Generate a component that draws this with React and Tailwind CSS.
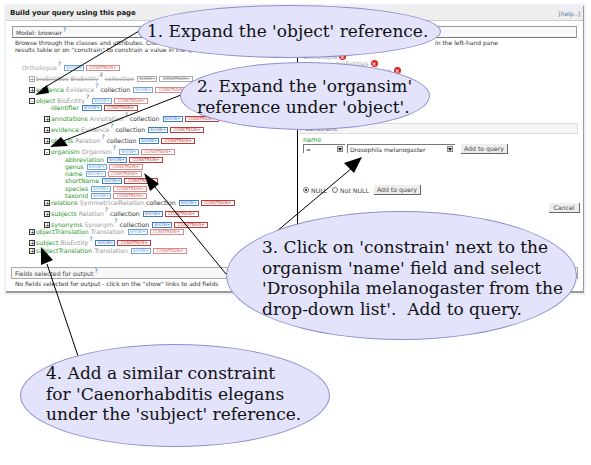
const rows = [
  { x: "pl-[16px]", h: "h-[11px]", name: "Orthologue", q: true, muted: true },
  { x: "pl-[23px]", h: "h-[11px]", icon: "+", field: "bioEntities", cls: "BioEntity", coll: true, q: true, strike: true },
  { x: "pl-[23px]", h: "h-[11px]", icon: "+", field: "evidence", cls: "Evidence", coll: true, q: true, light: true },
  { x: "pl-[23px]", h: "h-[7px]", icon: "-", field: "object", cls: "BioEntity", q: true, light: true },
  { x: "pl-[45px]", h: "h-[11px]", field: "identifier" },
  { x: "pl-[38px]", h: "h-[11px]", icon: "+", field: "annotations", cls: "Annotation", coll: true, q: true },
  { x: "pl-[38px]", h: "h-[11px]", icon: "+", field: "evidence", cls: "Evidence", coll: true, q: true },
  { x: "pl-[38px]", h: "h-[11px]", icon: "+", field: "objects", cls: "Relation", coll: true, q: true },
  { x: "pl-[38px]", h: "h-[8px]", icon: "-", field: "organism", cls: "Organism", q: true, light: true },
  { x: "pl-[59px]", h: "h-[7px]", field: "abbreviation" },
  { x: "pl-[59px]", h: "h-[7px]", field: "genus", light: true },
  { x: "pl-[59px]", h: "h-[7px]", field: "name", light: true },
  { x: "pl-[59px]", h: "h-[8px]", field: "shortName" },
  { x: "pl-[59px]", h: "h-[7px]", field: "species", light: true },
  { x: "pl-[59px]", h: "h-[7px]", field: "taxonId", light: true },
  { x: "pl-[38px]", h: "h-[11px]", icon: "+", field: "relations", cls: "SymmetricalRelation", coll: true },
  { x: "pl-[38px]", h: "h-[11px]", icon: "+", field: "subjects", cls: "Relation", coll: true, q: true },
  { x: "pl-[38px]", h: "h-[7.5px]", icon: "+", field: "synonyms", cls: "Synonym", coll: true, q: true },
  { x: "pl-[23px]", h: "h-[11px]", icon: "+", field: "objectTranslation", cls: "Translation", light: true },
  { x: "pl-[23px]", h: "h-[7.5px]", icon: "+", field: "subject", cls: "BioEntity", q: true },
  { x: "pl-[23px]", h: "h-[7px]", icon: "+", field: "subjectTranslation", cls: "Translation", light: true },
];

function Badges({ light, strike }) {
  if (strike)
    return (
      <span className="flex gap-[2px] ml-[3px] mt-[1px]">
        <span className="w-[20px] h-[6px] border border-[#aaa] text-[4px] leading-[4px] text-center text-[#888]">SHOW+</span>
        <span className="w-[34px] h-[6px] border border-[#aaa] text-[4px] leading-[4px] text-center text-[#888]">CONSTRAIN+</span>
      </span>
    );
  return (
    <span className="flex gap-[2px] ml-[3px] mt-[1px]">
      <span className={light ? "w-[20px] h-[6px] border border-[#6fa3dc] text-[4px] leading-[4px] text-center text-[#6fa3dc]" : "w-[20px] h-[6px] border border-[#3c7cc4] text-[4px] leading-[4px] text-center text-[#3c7cc4]"}>SHOW+</span>
      <span className={light ? "w-[34px] h-[6px] border border-[#d88] text-[4px] leading-[4px] text-center text-[#c66]" : "w-[34px] h-[6px] border border-[#c03a3a] text-[4px] leading-[4px] text-center text-[#c03a3a]"}>CONSTRAIN+</span>
    </span>
  );
}

function Row({ r }) {
  return (
    <div className={`flex items-start whitespace-nowrap text-[6.2px] ${r.x} ${r.h} ${r.strike ? "line-through text-[#aaa]" : ""}`}>
      {r.icon && (
        <span className={r.strike ? "w-[6px] h-[6px] mt-[1px] border border-[#aaa] text-[#aaa] text-[6px] leading-[4px] text-center mr-[1px] shrink-0" : "w-[6px] h-[6px] mt-[1px] border border-[#333] text-[#222] text-[6px] leading-[4px] text-center mr-[1px] shrink-0"}>{r.icon}</span>
      )}
      {r.field && <span className={r.strike ? "text-[#aaa]" : "text-[#2a962a]"}>{r.field}</span>}
      {r.name && <span className="text-[#aaa]">{r.name}</span>}
      {r.cls && <span className={r.strike ? "text-[#aaa] ml-[2px]" : "text-[#999] ml-[2px]"}>{r.cls}</span>}
      {r.q && <span className="text-[#2a5fb0] text-[6px] leading-[6px] -mt-[3px] ml-[1px]">?</span>}
      {r.coll && <span className={r.strike ? "text-[#aaa] ml-[2px]" : "text-[#333] ml-[2px]"}>collection</span>}
      <Badges light={r.light || r.muted} strike={r.strike} />
    </div>
  );
}

function Select({ w, text }) {
  return (
    <div className={`flex items-center justify-between h-[9px] border-t border-l border-[#777] bg-white ${w}`}>
      <span className="pl-[2px] text-[6px] leading-[7px] text-[#333]">{text}</span>
      <span className="w-[6px] h-[6px] mr-[2px] bg-[#ddd] border border-[#888] flex items-center justify-center">
        <svg width="4" height="3" viewBox="0 0 4 3"><path d="M0 0H4L2 3Z" fill="#222" /></svg>
      </span>
    </div>
  );
}

function Btn({ children, w }) {
  return (
    <span className={`h-[10px] bg-[#eee] border-r border-b border-[#666] text-[6.2px] leading-[9px] text-center text-[#444] ${w}`}>{children}</span>
  );
}

function RedX() {
  return (
    <span className="inline-flex w-[7px] h-[7px] rounded-full bg-[#e02020] text-white text-[6px] leading-[7px] items-center justify-center font-bold">×</span>
  );
}

export default function App() {
  return (
    <div className="relative w-[591px] h-[465px] bg-white overflow-hidden font-['DejaVu_Sans',sans-serif] text-[6.2px] leading-[7px]">
      <div className="ml-[4px] mt-[4px] w-[582px] h-[291px] bg-[#f0f0fa] pl-[2px] pt-[2px]">
        <div className="w-[578px] h-[287px] bg-white border-r border-b-2 border-[#999] flex flex-col">
          <div className="h-[15px] shrink-0 bg-[#eee] border-b border-[#ccc] flex items-center justify-between pl-[4px] pr-[3px]">
            <span className="text-[7px] text-[#222] font-bold tracking-[-0.1px]">Build your query using this page</span>
            <span className="text-[6px] text-[#5577aa]">[help..]</span>
          </div>
          <div className="mx-[6px] mt-[5px] h-[12px] shrink-0 border border-[#999] border-b-[#777] bg-[#f8f8f8] flex items-center pl-[3px] text-[#444] text-[6px]">
            Model: browser<span className="text-[#2a5fb0] -mt-[6px] ml-[1px]">?</span>
          </div>
          <div className="ml-[9px] mt-[2px] h-[16px] shrink-0 text-[6px] leading-[6.5px] text-[#333] whitespace-nowrap">
            <div className="flex justify-between pr-[85px]">
              <span>Browse through the classes and attributes. Click</span>
              <span>in the left-hand pane</span>
            </div>
            <div>results table or on "constrain" to constrain a value in the query.</div>
          </div>
          <div className="flex flex-1 min-h-0">
            <div className="w-[291px] shrink-0 pt-[7.5px]">
              {rows.map((r, i) => (
                <Row key={i} r={r} />
              ))}
            </div>
            <div className="flex-1 border-l border-black -mt-[3px] pl-[5px] pr-[5px]">
              <div className="flex items-center gap-[1px] h-[7px] text-[#aaa]">Orthologue<RedX /></div>
              <div className="flex items-center gap-[2px] h-[7px] pl-[33px] text-[#aaa]">bioEntities<RedX /></div>
              <div className="flex items-center gap-[2px] h-[7px] pl-[59px] text-[#aaa]">collection<RedX /></div>
              <div className="mt-[49px] -ml-[3px] h-[11px] border border-[#ddd] bg-[#f6f6f6] flex items-center pl-[4px] text-[#666]">Constraint</div>
              <div className="mt-[3px] text-[#2a962a] text-[6.5px]">name</div>
              <div className="flex items-start gap-[2px]">
                <Select w="w-[42px]" text="=" />
                <Select w="w-[108px]" text="Drosophila melanogaster" />
                <span className="ml-[4px]"><Btn w="w-[47px] inline-block">Add to query</Btn></span>
              </div>
              <div className="flex items-center mt-[31px] h-[10px] text-[#444]">
                <span className="w-[6px] h-[6px] rounded-full border border-[#777] bg-white mr-[2px] flex items-center justify-center"><span className="w-[2px] h-[2px] rounded-full bg-black"></span></span>
                NULL
                <span className="w-[6px] h-[6px] rounded-full border border-[#777] bg-white ml-[5px] mr-[2px]"></span>
                Not NULL
                <span className="ml-[5px]"><Btn w="w-[47px] inline-block">Add to query</Btn></span>
              </div>
              <div className="flex justify-end mt-[8px] -mr-[2px]">
                <Btn w="w-[31px]">Cancel</Btn>
              </div>
            </div>
          </div>
          <div className="mx-[5px] h-[12px] shrink-0 border border-[#aaa] bg-[#f8f8f8] flex items-center pl-[3px] text-[#444]">
            Fields selected for output<span className="text-[#2a5fb0] -mt-[6px] ml-[1px]">?</span>
          </div>
          <div className="ml-[9px] mt-[1px] mb-[4px] text-[6px] text-[#333] whitespace-nowrap">No fields selected for output - click on the "show" links to add fields</div>
        </div>
      </div>

      <svg className="absolute left-0 top-0" width="591" height="465">
        <g stroke="#000" strokeWidth="1" fill="none">
          <line x1="139" y1="31" x2="42" y2="89" />
          <line x1="181" y1="95" x2="58" y2="143" />
          <line x1="226" y1="274" x2="155" y2="187" />
          <line x1="226" y1="274" x2="352" y2="168" />
          <line x1="78" y1="356" x2="47" y2="264" />
        </g>
        <polygon points="35,95 47,85 49,93" fill="#000" />
        <polygon points="50,147 61,137 68,146" fill="#000" />
        <polygon points="144,173 159,184 150,191" fill="#000" />
        <polygon points="362,157 344,163 354,173" fill="#000" />
        <polygon points="41,247 53,260 41,265" fill="#000" />
      </svg>

      <div className="absolute left-[138px] top-[5px] w-[303px] h-[53px] rounded-[50%] bg-[#e3e3fb] border border-[#8f8fd0] font-['DejaVu_Serif',serif] text-[17px] leading-[21px] text-[#111] pl-[8px] pt-[15px] whitespace-nowrap">1. Expand the 'object' reference.</div>
      <div className="absolute left-[180px] top-[62px] w-[250px] h-[68px] rounded-[50%] bg-[#e3e3fb] border border-[#8f8fd0] font-['DejaVu_Serif',serif] text-[17px] leading-[21px] text-[#111] pl-[16px] pt-[13px] whitespace-nowrap">2. Expand the 'organsim'<br />reference under 'object'.</div>
      <div className="absolute left-[226px] top-[211px] w-[351px] h-[129px] rounded-[50%] bg-[#e3e3fb] border border-[#8f8fd0] font-['DejaVu_Serif',serif] text-[17px] leading-[20.7px] text-[#111] pl-[35px] pt-[25px] whitespace-pre">3. Click on 'constrain' next to the<br />organism 'name' field and select<br />'Drosophila melanogaster from the<br />drop-down list'.  Add to query.</div>
      <div className="absolute left-[20px] top-[344px] w-[310px] h-[103px] rounded-[50%] bg-[#e3e3fb] border border-[#8f8fd0] font-['DejaVu_Serif',serif] text-[17px] leading-[20.7px] text-[#111] pl-[25px] pt-[18px] whitespace-nowrap">4. Add a similar constraint<br />for 'Caenorhabditis elegans<br />under the 'subject' reference.</div>
    </div>
  );
}
